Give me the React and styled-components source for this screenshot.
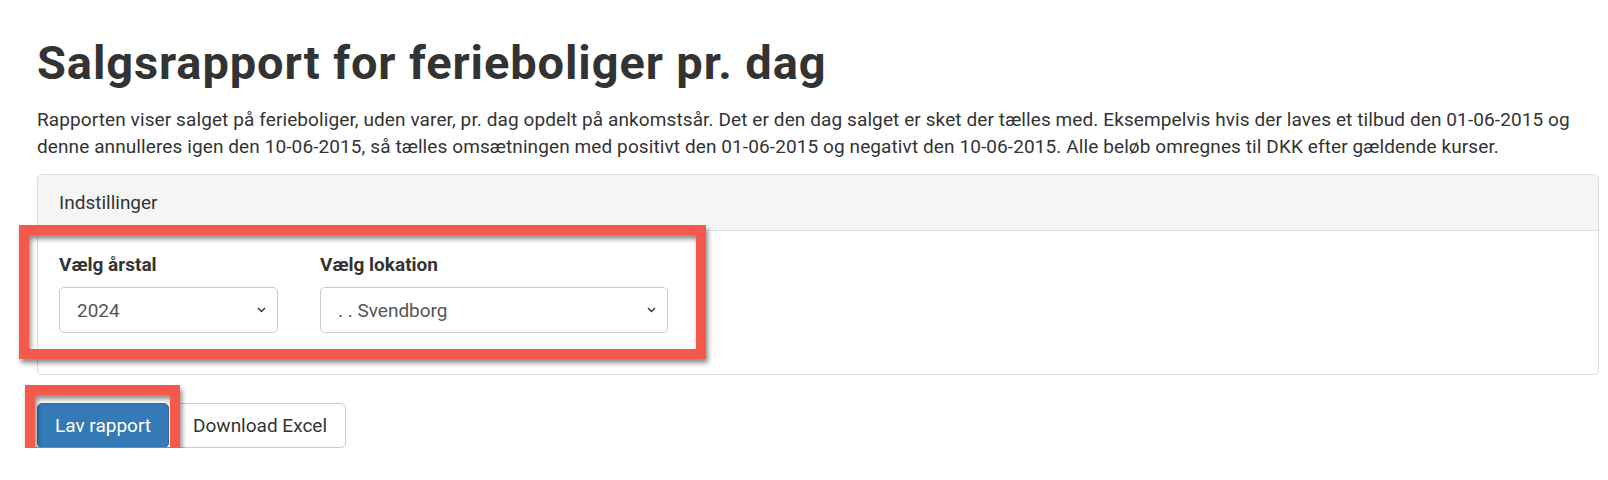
import React from 'react'
import styled, { createGlobalStyle } from 'styled-components'

const GlobalStyle = createGlobalStyle`
  body {
    margin: 0;
    background: #fff;
    color: #333;
    font-family: Roboto, "Liberation Sans", Arial, sans-serif;
    font-size: 19px;
  }
`

const Page = styled.main`
  padding: 36px 9px 0 37px;
`

const Title = styled.h1`
  margin: 0 0 16px;
  font-size: 47px;
  line-height: 54px;
  font-weight: 700;
  letter-spacing: 0.9px;
  color: #333;
`

const Intro = styled.p`
  margin: 0 0 14px;
  font-size: 19px;
  line-height: 27px;
  letter-spacing: 0.1px;
`

const Card = styled.section`
  border: 1px solid #ddd;
  border-radius: 5px;
`

const CardHeader = styled.div`
  padding: 14px 21px;
  background: #f5f5f5;
  border-bottom: 1px solid #ddd;
  border-radius: 5px 5px 0 0;
  line-height: 27px;
`

const CardBody = styled.div`
  padding: 20px 21px 23px;
`

const FormRow = styled.div`
  position: relative;
  display: flex;
  gap: 42px;
  width: fit-content;
  margin-bottom: 18px;
`

const Field = styled.div`
  display: flex;
  flex-direction: column;
  width: ${p => p.width}px;
`

const Label = styled.label`
  margin-bottom: 9px;
  line-height: 27px;
  font-weight: 700;
`

const SelectWrap = styled.div`
  position: relative;
`

const Select = styled.select`
  appearance: none;
  width: 100%;
  height: 46px;
  padding: 0 30px 0 17px;
  border: 1px solid #ccc;
  border-radius: 5px;
  background: #fff;
  color: #555;
  font-family: inherit;
  font-size: 19px;
  outline: none;
`

const Chevron = styled.svg`
  position: absolute;
  right: 12px;
  top: 50%;
  margin-top: -3px;
  pointer-events: none;
`

const Actions = styled.div`
  display: flex;
  gap: 5px;
  margin-top: 28px;
`

const Marked = styled.div`
  position: relative;
  display: flex;
`

const Button = styled.button`
  height: 45px;
  padding: 0 ${p => (p.primary ? 17 : 18)}px;
  border: 1px solid ${p => (p.primary ? '#2e6da4' : '#ccc')};
  border-radius: 5px;
  background: ${p => (p.primary ? '#337ab7' : '#fff')};
  color: ${p => (p.primary ? '#fff' : '#333')};
  font-family: inherit;
  font-size: 19px;
  cursor: pointer;
`

// the red boxes drawn over the screenshot
const Annotation = styled.div`
  position: absolute;
  top: ${p => p.inset[0]}px;
  right: ${p => p.inset[1]}px;
  bottom: ${p => p.inset[2]}px;
  left: ${p => p.inset[3]}px;
  border: 10px solid #f4594c;
  box-shadow: 2px 4px 5px rgba(0, 0, 0, 0.45), inset 2px 4px 5px rgba(0, 0, 0, 0.45);
  pointer-events: none;
`

const SelectField = ({ label, width, value, options }) => (
  <Field width={width}>
    <Label>{label}</Label>
    <SelectWrap>
      <Select defaultValue={value}>
        {options.map(o => (
          <option key={o} value={o}>
            {o}
          </option>
        ))}
      </Select>
      <Chevron width="9" height="6" viewBox="0 0 9 6">
        <path d="M1 1l3.5 3.5L8 1" fill="none" stroke="#333" strokeWidth="1.4" />
      </Chevron>
    </SelectWrap>
  </Field>
)

export default function App() {
  return (
    <Page>
      <GlobalStyle />
      <Title>Salgsrapport for ferieboliger pr. dag</Title>
      <Intro>
        Rapporten viser salget på ferieboliger, uden varer, pr. dag opdelt på ankomstsår. Det er den dag
        salget er sket der tælles med. Eksempelvis hvis der laves et tilbud den 01-06-2015 og denne
        annulleres igen den 10-06-2015, så tælles omsætningen med positivt den 01-06-2015 og negativt den
        10-06-2015. Alle beløb omregnes til DKK efter gældende kurser.
      </Intro>
      <Card>
        <CardHeader>Indstillinger</CardHeader>
        <CardBody>
          <FormRow>
            <SelectField label="Vælg årstal" width={219} value="2024" options={['2025', '2024', '2023', '2022']} />
            <SelectField
              label="Vælg lokation"
              width={348}
              value=". . Svendborg"
              options={['Alle', '. . Svendborg']}
            />
            <Annotation inset={[-26, -38, -26, -40]} />
          </FormRow>
        </CardBody>
      </Card>
      <Actions>
        <Marked>
          <Button primary>Lav rapport</Button>
          <Annotation inset={[-18, -11, -9, -12]} />
        </Marked>
        <Button>Download Excel</Button>
      </Actions>
    </Page>
  )
}
